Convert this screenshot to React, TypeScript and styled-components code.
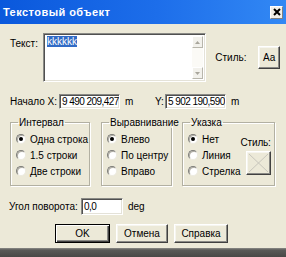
import React from "react";
import styled, { createGlobalStyle } from "styled-components";

const Global = createGlobalStyle`
  html, body { margin: 0; padding: 0; background: #ece9d8; }
  body {
    width: 286px; height: 257px; overflow: hidden;
    font-family: "Liberation Sans", Arial, sans-serif;
    font-size: 10px; color: #000;
  }
  * { box-sizing: border-box; }
`;

const Window = styled.div`
  width: 286px;
  height: 257px;
  display: flex;
  flex-direction: column;
  background: #ece9d8;
`;

const TitleBar = styled.div`
  height: 24px;
  flex: none;
  display: flex;
  align-items: center;
  justify-content: space-between;
  padding: 0 3px 0 3px;
  background: linear-gradient(to right, #0a58dc 0%, #1d6eea 55%, #3288f4 100%);
  color: #fff;
  font-weight: bold;
  font-size: 11px;
  letter-spacing: 0.45px;
`;

const CloseBtn = styled.div`
  width: 13px;
  height: 13px;
  background: #f0efe8;
  border: 1px solid #fff;
  border-right-color: #808080;
  border-bottom-color: #808080;
  display: flex;
  align-items: center;
  justify-content: center;
`;

const Body = styled.div`
  flex: 1;
  display: flex;
  flex-direction: column;
  padding: 0 6px 0 10px;
`;

const TextRow = styled.div`
  display: flex;
  align-items: flex-start;
  margin-top: 9px;
`;

const Label = styled.span<{ $w?: number }>`
  flex: none;
  width: ${(p) => (p.$w ? `${p.$w}px` : "auto")};
  line-height: 12px;
  white-space: nowrap;
`;

const TextLabel = styled(Label)`
  margin-top: 5px;
`;

const Sunken = styled.div`
  background: #fff;
  border: 1px solid;
  border-color: #8a8a86 #fff #fff #8a8a86;
  box-shadow: inset 1px 1px 0 #505050, inset -1px -1px 0 #e4e2d8;
`;

const TextArea = styled(Sunken)`
  width: 167px;
  height: 49px;
  display: flex;
  padding: 2px 2px 2px 3px;
`;

const TextContent = styled.div`
  flex: 1;
  line-height: 12px;
`;

const Selected = styled.span`
  background: #316ac5;
  color: #fff;
`;

const ScrollBar = styled.div`
  width: 11px;
  display: flex;
  flex-direction: column;
  justify-content: space-between;
  background: #fbfaf6;
`;

const ScrollBtn = styled.div`
  height: 12px;
  background: #f2f1ec;
  border: 1px solid;
  border-color: #fff #b8b6ac #b8b6ac #fff;
  display: flex;
  align-items: center;
  justify-content: center;
`;

const StyleLabel = styled(Label)`
  align-self: center;
  margin-left: 9px;
`;

const Raised = styled.div`
  background: #ece9d8;
  border: 1px solid;
  border-color: #fff #404040 #404040 #fff;
  box-shadow: inset -1px -1px 0 #8a8a86, inset 1px 1px 0 #f6f5ef;
  display: flex;
  align-items: center;
  justify-content: center;
`;

const AaButton = styled(Raised)`
  align-self: center;
  margin-left: 12px;
  width: 22px;
  height: 23px;
  font-size: 10px;
`;

const CoordRow = styled.div`
  display: flex;
  align-items: center;
  margin-top: 12px;
  height: 15px;
`;

const Field = styled(Sunken)<{ $w: number; $h: number }>`
  width: ${(p) => p.$w}px;
  height: ${(p) => p.$h}px;
  padding: 0 2px;
  display: flex;
  align-items: center;
  white-space: nowrap;
  line-height: 12px;
  letter-spacing: -0.55px;
  overflow: hidden;
`;

const Unit = styled(Label)`
  margin-left: 5px;
`;

const YLabel = styled(Label)`
  margin-left: 22px;
  width: 10px;
`;

const GroupsRow = styled.div`
  display: flex;
  margin-top: 8px;
`;

const Group = styled.fieldset<{ $w: number; $ml: number }>`
  width: ${(p) => p.$w}px;
  height: 69px;
  margin: 0 0 0 ${(p) => p.$ml}px;
  padding: 3px 4px 0 5px;
  min-width: 0;
  border: 1px solid #b2b0a2;
  box-shadow: inset 1px 1px 0 #fff, 1px 1px 0 #fff;
  display: flex;
`;

const Legend = styled.legend`
  padding: 0 1px;
  margin-left: 2px;
  line-height: 11px;
`;

const RadioList = styled.div`
  display: flex;
  flex-direction: column;
`;

const RadioRow = styled.div`
  display: flex;
  align-items: center;
  height: 16px;
  white-space: nowrap;
`;

const RadioCircle = styled.span<{ $on?: boolean }>`
  flex: none;
  width: 10px;
  height: 10px;
  margin-right: 4px;
  border-radius: 50%;
  background: #fff;
  border: 1px solid;
  border-color: #7c7c78 #eceae0 #eceae0 #7c7c78;
  box-shadow: inset 1px 1px 0 #b0aea4;
  display: flex;
  align-items: center;
  justify-content: center;
  &::after {
    content: "";
    display: ${(p) => (p.$on ? "block" : "none")};
    width: 4px;
    height: 4px;
    border-radius: 50%;
    background: #000;
  }
`;

const PointerStyle = styled.div`
  margin-left: auto;
  display: flex;
  flex-direction: column;
  align-items: flex-end;
  padding-top: 6px;
`;

const PointerLabel = styled(Label)`
  letter-spacing: -0.2px;
`;

const XButton = styled(Raised)`
  margin-top: 2px;
  width: 25px;
  height: 24px;
`;

const AngleRow = styled.div`
  display: flex;
  align-items: center;
  margin-top: 12px;
  margin-left: -1px;
`;

const ButtonRow = styled.div`
  display: flex;
  gap: 6px;
  margin-top: 9px;
  padding-left: 45px;
`;

const PushButton = styled(Raised)<{ $w: number; $default?: boolean }>`
  width: ${(p) => p.$w}px;
  height: 19px;
  ${(p) =>
    p.$default
      ? `border-color: #000; box-shadow: inset 1px 1px 0 #fff, inset -1px -1px 0 #404040, inset -2px -2px 0 #8a8a86;`
      : ""}
`;

const Footer = styled.div`
  margin-top: auto;
  height: 9px;
  flex: none;
  background: linear-gradient(to bottom, #8c8c88 0px, #5a5a58 2px, #484846 100%);
`;

const Radio = ({ on, children }: { on?: boolean; children: React.ReactNode }) => (
  <RadioRow>
    <RadioCircle $on={on} />
    {children}
  </RadioRow>
);

export default function App() {
  return (
    <>
      <Global />
      <Window>
        <TitleBar>
          <span>Текстовый объект</span>
          <CloseBtn>
            <svg width="8" height="8" viewBox="0 0 8 8">
              <path d="M1 1 L7 7 M7 1 L1 7" stroke="#000" strokeWidth="2" />
            </svg>
          </CloseBtn>
        </TitleBar>
        <Body>
          <TextRow>
            <TextLabel $w={33}>Текст:</TextLabel>
            <TextArea>
              <TextContent>
                <Selected>kkkkkk</Selected>
              </TextContent>
              <ScrollBar>
                <ScrollBtn>
                  <svg width="5" height="3" viewBox="0 0 5 3">
                    <path d="M0 3 L2.5 0 L5 3 Z" fill="#a8a69c" />
                  </svg>
                </ScrollBtn>
                <ScrollBtn>
                  <svg width="5" height="3" viewBox="0 0 5 3">
                    <path d="M0 0 L2.5 3 L5 0 Z" fill="#a8a69c" />
                  </svg>
                </ScrollBtn>
              </ScrollBar>
            </TextArea>
            <StyleLabel>Стиль:</StyleLabel>
            <AaButton>Aa</AaButton>
          </TextRow>

          <CoordRow>
            <Label $w={49}>Начало X:</Label>
            <Field $w={61} $h={15}>9 490 209,427</Field>
            <Unit $w={8}>m</Unit>
            <YLabel>Y:</YLabel>
            <Field $w={61} $h={15}>5 902 190,590</Field>
            <Unit>m</Unit>
          </CoordRow>

          <GroupsRow>
            <Group $w={80} $ml={0}>
              <Legend>Интервал</Legend>
              <RadioList>
                <Radio on>Одна строка</Radio>
                <Radio>1.5 строки</Radio>
                <Radio>Две строки</Radio>
              </RadioList>
            </Group>
            <Group $w={71} $ml={11}>
              <Legend>Выравнивание</Legend>
              <RadioList>
                <Radio on>Влево</Radio>
                <Radio>По центру</Radio>
                <Radio>Вправо</Radio>
              </RadioList>
            </Group>
            <Group $w={93} $ml={10}>
              <Legend>Указка</Legend>
              <RadioList>
                <Radio on>Нет</Radio>
                <Radio>Линия</Radio>
                <Radio>Стрелка</Radio>
              </RadioList>
              <PointerStyle>
                <PointerLabel>Стиль:</PointerLabel>
                <XButton>
                  <svg width="21" height="20" viewBox="0 0 21 20">
                    <path d="M1 1 L20 19 M20 1 L1 19" stroke="#c8c6bc" strokeWidth="1" />
                  </svg>
                </XButton>
              </PointerStyle>
            </Group>
          </GroupsRow>

          <AngleRow>
            <Label $w={72}>Угол поворота:</Label>
            <Field $w={42} $h={17}>0,0</Field>
            <Unit>deg</Unit>
          </AngleRow>

          <ButtonRow>
            <PushButton $w={55} $default>OK</PushButton>
            <PushButton $w={52}>Отмена</PushButton>
            <PushButton $w={54}>Справка</PushButton>
          </ButtonRow>
        </Body>
        <Footer />
      </Window>
    </>
  );
}
